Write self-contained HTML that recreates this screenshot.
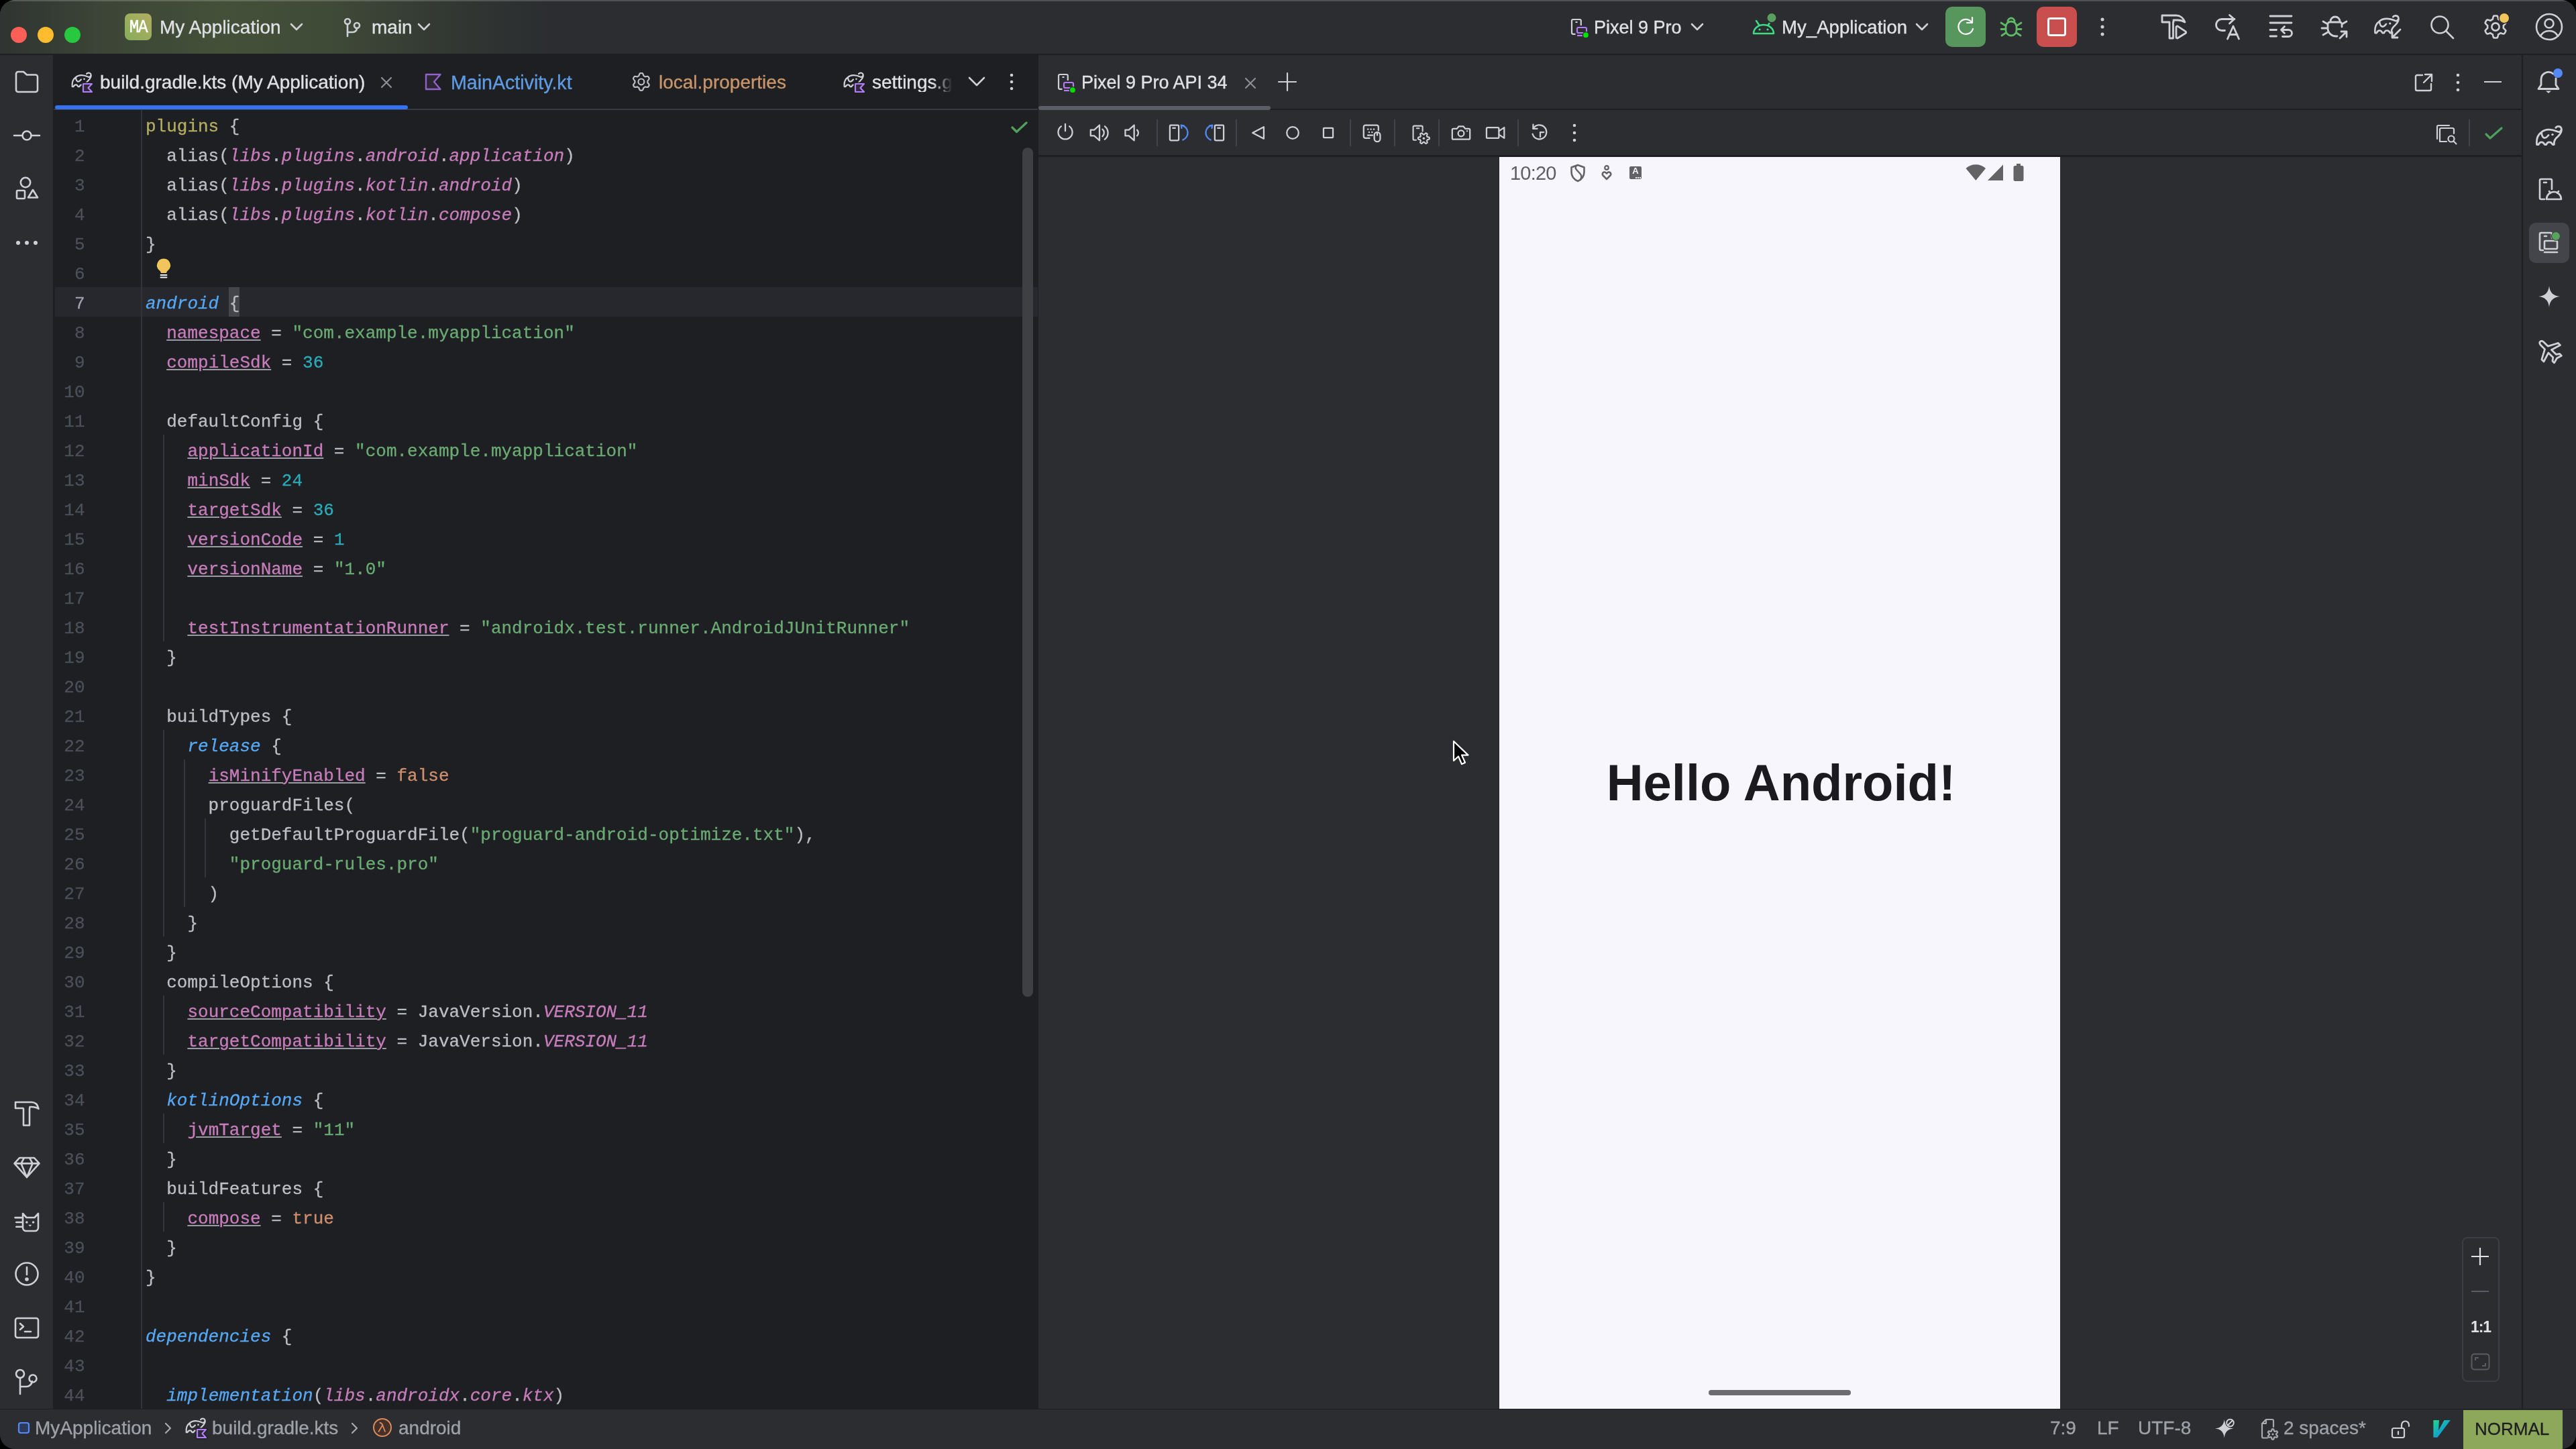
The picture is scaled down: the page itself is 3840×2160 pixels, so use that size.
<!DOCTYPE html>
<html><head><meta charset="utf-8">
<style>
*{box-sizing:border-box;margin:0;padding:0}
html,body{width:3840px;height:2160px;overflow:hidden;background:#000}
body{font-family:"Liberation Sans",sans-serif;position:relative}
.abs{position:absolute}
#win{position:absolute;left:0;top:0;width:3840px;height:2160px;background:#2b2d30;border-radius:22px;overflow:hidden;will-change:transform}
#title{position:absolute;left:0;top:0;width:3840px;height:82px;background:#2b2d30;border-bottom:2px solid #1e1f22}
#titleglow{position:absolute;left:0;top:0;width:1100px;height:80px;background:linear-gradient(90deg,rgba(98,124,68,0.08) 0px,rgba(98,124,68,0.3) 150px,rgba(98,124,68,0.45) 330px,rgba(98,124,68,0.38) 480px,rgba(98,124,68,0.12) 680px,rgba(98,124,68,0) 820px)}
.tl{position:absolute;top:40px;width:24px;height:24px;border-radius:50%}
.tt{position:absolute;color:#dfe1e5;font-size:28px;line-height:28px;white-space:pre;-webkit-text-stroke:0.35px currentColor}
#leftbar{position:absolute;left:0;top:80px;width:80px;height:2020px;background:#2b2d30;border-right:1px solid #1e1f22}
#editor{position:absolute;left:80px;top:80px;width:1468px;height:2020px;background:#1e1f22}
#etabs{position:absolute;left:0;top:0;width:1467px;height:84px;background:#1e1f22;border-bottom:2px solid #393b40}
#emu{position:absolute;left:1548px;top:80px;width:2211px;height:2020px;background:#2b2d30}
#rightbar{position:absolute;left:3759px;top:80px;width:81px;height:2020px;background:#2b2d30;border-left:2px solid #1e1f22}
#status{position:absolute;left:0;top:2100px;width:3840px;height:60px;background:#2b2d30;border-top:1px solid #1e1f22}
.ico{position:absolute;overflow:visible}
.ico *{fill:none;stroke:#ced0d6;stroke-width:2.6;stroke-linecap:round;stroke-linejoin:round}
#code{position:absolute;left:0;top:84px;width:1467px;height:1936px;font-family:"Liberation Mono",monospace;font-size:26px;-webkit-text-stroke:0.3px currentColor}
.ln{position:absolute;left:0;width:46.5px;text-align:right;color:#4b5059;height:44px;line-height:44px;padding-top:3px}
.ln.cur{color:#a1a3ab}
.cl{position:absolute;left:137px;height:44px;line-height:44px;white-space:pre;color:#bcbec4;padding-top:3px}
.k{color:#cf8e6d}.s{color:#6aab73}.n{color:#2aacb8}.p{color:#c77dbb}.f{color:#56a8f5;font-style:italic}.i{font-style:italic}
.u{text-decoration:underline;text-decoration-color:#9a9ca1;text-underline-offset:1.5px;text-decoration-thickness:2px}
.y{color:#b3ae60}
.guide{position:absolute;width:2px;background:#34363b}
</style></head><body>
<div id="win">
  <div id="title">
    <div id="titleglow"></div>
    <div class="tl" style="left:16px;background:#ff5f57"></div>
    <div class="tl" style="left:56px;background:#febc2e"></div>
    <div class="tl" style="left:96px;background:#28c840"></div>
    <div class="abs" style="left:186px;top:20px;width:40px;height:40px;border-radius:8px;background:linear-gradient(45deg,#86ad5a,#b2ad62)"></div>
    <div class="abs" style="left:186px;top:20px;width:40px;height:40px;line-height:42px;text-align:center;font-family:'Liberation Mono';font-size:27px;color:#fff;letter-spacing:-1.5px;transform:scaleX(0.9);-webkit-text-stroke:0.5px #fff">MA</div>
    <div class="tt" style="left:238px;top:27px">My Application</div>
    <svg class="ico" style="left:432px;top:34px" width="20" height="12" viewBox="0 0 20 12"><path d="M2 2l8 8 8-8"/></svg>
    <svg class="ico" style="left:510px;top:26px" width="30" height="30" viewBox="0 0 30 30"><circle cx="8" cy="6" r="4"/><circle cx="22" cy="12" r="4"/><path d="M8 10v18M8 22h8a6 6 0 0 0 6-6"/></svg>
    <div class="tt" style="left:554px;top:27px">main</div>
    <svg class="ico" style="left:622px;top:34px" width="20" height="12" viewBox="0 0 20 12"><path d="M2 2l8 8 8-8"/></svg>

    <svg class="ico" style="left:2338px;top:26px" width="34" height="34" viewBox="0 0 34 34"><path style="stroke-width:2.2;stroke-linecap:butt" d="M10.5 24.8H7a2 2 0 0 1-2-2V5a2 2 0 0 1 2-2h9.8a2 2 0 0 1 2 2v7M10.5 7h3"/><rect x="13" y="15" width="14" height="8" rx="2" style="stroke:#b57bf5;stroke-width:2.2"/><path style="stroke:#b57bf5;stroke-width:2.2;stroke-linecap:butt" d="M13 27h10"/><circle cx="26" cy="26.2" r="4.6" style="fill:#00e000;stroke:#2b2d30;stroke-width:1.4"/></svg>
    <div class="tt" style="left:2376px;top:27px;font-size:27px">Pixel 9 Pro</div>
    <svg class="ico" style="left:2520px;top:34px" width="20" height="12" viewBox="0 0 20 12"><path d="M2 2l8 8 8-8"/></svg>
    <svg class="ico" style="left:2610px;top:16px" width="44" height="38" viewBox="0 0 44 38"><path style="stroke:#3ddc84;stroke-width:2.6" d="M4 34a15 13 0 0 1 30 0zM8 15l4 6M30 15l-4 6"/><circle cx="13" cy="28" r="1.6" style="fill:#3ddc84;stroke:none"/><circle cx="25" cy="28" r="1.6" style="fill:#3ddc84;stroke:none"/><circle cx="31" cy="10.5" r="7.5" style="fill:#5a9e5f;stroke:#2b2d30;stroke-width:2"/></svg>
    <div class="tt" style="left:2656px;top:27px;font-size:27.6px">My_Application</div>
    <svg class="ico" style="left:2855px;top:34px" width="20" height="12" viewBox="0 0 20 12"><path d="M2 2l8 8 8-8"/></svg>
    <div class="abs" style="left:2900px;top:10px;width:60px;height:60px;border-radius:10px;background:#57965c"></div>
    <svg class="ico" style="left:2910px;top:20px" width="40" height="40" viewBox="0 0 40 40"><path style="stroke:#fff;stroke-width:2.2" d="M29 13a11 11 0 1 0 2 10"/><path style="stroke:#fff;stroke-width:2.2" d="M30 6v8h-8"/></svg>
    <svg class="ico" style="left:2980px;top:22px" width="36" height="36" viewBox="0 0 36 36"><path style="stroke:#5fb865;stroke-width:2.8" d="M13 10A5 5 0 0 1 23 10M10 18a8 8 0 0 1 16 0v5a8 8 0 0 1-16 0zM3 12l7 4.5M3 21.5h7M4 31l6-4M33 12l-7 4.5M33 21.5h-7M32 31l-6-4"/></svg>
    <div class="abs" style="left:3036px;top:10px;width:60px;height:60px;border-radius:10px;background:#c94f4f"></div>
    <div class="abs" style="left:3052px;top:26px;width:28px;height:28px;border-radius:4px;border:3px solid #fff"></div>
    <svg class="ico" style="left:3124px;top:22px" width="20" height="36" viewBox="0 0 20 36"><circle cx="10" cy="7" r="2.5" style="fill:#ced0d6;stroke:none"/><circle cx="10" cy="18" r="2.5" style="fill:#ced0d6;stroke:none"/><circle cx="10" cy="29" r="2.5" style="fill:#ced0d6;stroke:none"/></svg>
    <svg class="ico" style="left:3220px;top:20px" width="44" height="42" viewBox="0 0 44 42"><path style="stroke-width:2.8" d="M14 37V13H3V3H24C30 3 35 7 37 13C34 11 30 10 26 10H20V13M19.5 13V37H14"/><path style="stroke-width:2.8" d="M24 20.5V35.5A1.5 1.5 0 0 0 26.3 36.8L38 29.5A1.5 1.5 0 0 0 38 26.9L26.3 19.2A1.5 1.5 0 0 0 24 20.5Z"/></svg>
    <svg class="ico" style="left:3300px;top:20px" width="44" height="42" viewBox="0 0 44 42"><path style="stroke-width:2.8" d="M16.5 25.5H12A8.5 8.5 0 0 1 12 8.5H31M23.5 2.5L30.5 8.5L23.5 15M20.5 38L29 19L37.5 38M23 31.5H35"/></svg>
    <svg class="ico" style="left:3380px;top:20px" width="40" height="42" viewBox="0 0 40 42"><path style="stroke-width:2.8" d="M4 4H36M4 14H36M4 24.5H13.5M4 34H13.5M21 24.5H31.5A5 5 0 0 1 31.5 34.5H22.5M25.5 19.5L20.5 24.5L25.5 29.5"/></svg>
    <svg class="ico" style="left:3458px;top:20px" width="44" height="42" viewBox="0 0 44 42"><path style="stroke-width:2.8" d="M16 12a7 7 0 0 1 14 0M33 20V16a3 3 0 0 0-3-3H15a3 3 0 0 0-3 3v6a12 12 0 0 0 12 12h2M3 22h8M5 12l7 4M5 32l7-4M40 12l-7 4M30 37l10-10M32 27h8v8"/></svg>
    <svg class="ico" style="left:3538px;top:20px" width="46" height="42" viewBox="0 0 46 42"><g transform="translate(1,2) scale(0.95)"><path style="stroke:#ced0d6;stroke-width:2.74" d="M29.8 3.3C31.5 1 36.5 0.5 38 4C39.5 8 37 12.5 33 16.5C30 19 28 21.5 27.5 24.5L27.3 28.5H25.2C24 26 22 24.8 20.2 24.8C18.5 24.8 16.5 26 15.7 28.5H13.2C12 26 10.5 24.8 8.6 24.8C6.8 24.8 5 26 4.1 28.5H1.6C0.8 21 3 14 8 10.5C14 5 24 5.5 33.5 9.5C35.5 10 37 9 37.5 7.5M8.5 10C8.8 14 9.5 17.5 12.5 18.5C14.5 19 17 17 19 14.5"/><circle cx="25" cy="13.6" r="1.7" style="fill:#ced0d6;stroke:none"/></g><path style="stroke:#2b2d30;stroke-width:7" d="M40 24L28 36"/><path style="stroke:#ced0d6;stroke-width:2.8" d="M40 24L28 36M28 28v8h8"/></svg>
    <svg class="ico" style="left:3620px;top:20px" width="42" height="42" viewBox="0 0 42 42"><circle cx="17" cy="17" r="12.5"/><path d="M26 26l11 11"/></svg>
    <svg class="ico" style="left:3700px;top:20px" width="44" height="44" viewBox="0 0 44 44"><path style="stroke-width:2.6" d="M31.90 20.00L31.89 20.42L31.87 20.83L31.83 21.24L31.78 21.66L31.95 22.11L32.64 22.69L33.36 23.33L34.07 24.03L34.72 24.78L35.29 25.56L35.30 26.18L35.07 26.71L34.83 27.23L34.57 27.75L34.29 28.25L33.99 28.74L33.68 29.23L33.35 29.70L33.00 30.16L32.46 30.46L31.50 30.36L30.53 30.16L29.56 29.90L28.65 29.60L27.80 29.29L27.33 29.38L26.99 29.63L26.65 29.87L26.31 30.09L25.95 30.31L25.59 30.51L25.22 30.70L24.84 30.87L24.46 31.03L24.15 31.40L23.99 32.29L23.79 33.23L23.54 34.20L23.22 35.14L22.83 36.02L22.30 36.34L21.72 36.41L21.15 36.46L20.58 36.49L20.00 36.50L19.42 36.49L18.85 36.46L18.28 36.41L17.70 36.34L17.17 36.02L16.78 35.14L16.46 34.20L16.21 33.23L16.01 32.29L15.85 31.40L15.54 31.03L15.16 30.87L14.78 30.70L14.41 30.51L14.05 30.31L13.69 30.09L13.35 29.87L13.01 29.63L12.67 29.38L12.20 29.29L11.35 29.60L10.44 29.90L9.47 30.16L8.50 30.36L7.54 30.46L7.00 30.16L6.65 29.70L6.32 29.23L6.01 28.74L5.71 28.25L5.43 27.75L5.17 27.23L4.93 26.71L4.70 26.18L4.71 25.56L5.28 24.78L5.93 24.03L6.64 23.33L7.36 22.69L8.05 22.11L8.22 21.66L8.17 21.24L8.13 20.83L8.11 20.42L8.10 20.00L8.11 19.58L8.13 19.17L8.17 18.76L8.22 18.34L8.05 17.89L7.36 17.31L6.64 16.67L5.93 15.97L5.28 15.22L4.71 14.44L4.70 13.82L4.93 13.29L5.17 12.77L5.43 12.25L5.71 11.75L6.01 11.26L6.32 10.77L6.65 10.30L7.00 9.84L7.54 9.54L8.50 9.64L9.47 9.84L10.44 10.10L11.35 10.40L12.20 10.71L12.67 10.62L13.01 10.37L13.35 10.13L13.69 9.91L14.05 9.69L14.41 9.49L14.78 9.30L15.16 9.13L15.54 8.97L15.85 8.60L16.01 7.71L16.21 6.77L16.46 5.80L16.78 4.86L17.17 3.98L17.70 3.66L18.28 3.59L18.85 3.54L19.42 3.51L20.00 3.50L20.58 3.51L21.15 3.54L21.72 3.59L22.30 3.66L22.83 3.98L23.22 4.86L23.54 5.80L23.79 6.77L23.99 7.71L24.15 8.60L24.46 8.97L24.84 9.13L25.22 9.30L25.59 9.49L25.95 9.69L26.31 9.91L26.65 10.13L26.99 10.37L27.33 10.62L27.80 10.71L28.65 10.40L29.56 10.10L30.53 9.84L31.50 9.64L32.46 9.54L33.00 9.84L33.35 10.30L33.68 10.77L33.99 11.26L34.29 11.75L34.57 12.25L34.83 12.77L35.07 13.29L35.30 13.82L35.29 14.44L34.72 15.22L34.07 15.97L33.36 16.67L32.64 17.31L31.95 17.89L31.78 18.34L31.83 18.76L31.87 19.17L31.89 19.58L31.90 20.00Z"/><circle cx="20" cy="20" r="5.6" style="stroke-width:2.6"/><circle cx="33" cy="7" r="8.5" style="fill:#2b2d30;stroke:none"/><circle cx="33" cy="7" r="7" style="fill:#f2c55c;stroke:none"/></svg>
    <svg class="ico" style="left:3776px;top:18px" width="48" height="46" viewBox="0 0 48 46"><circle cx="24" cy="22" r="19"/><circle cx="24" cy="17" r="6.5"/><path d="M11 36c3-6 8-8 13-8s10 2 13 8"/></svg>

  </div>
  <div id="leftbar"></div>
  <div id="editor">
    <div id="etabs"></div>
    <div id="code">
<div class="abs" style="left:2px;top:264px;width:1465px;height:44px;background:#26282e"></div>
<div class="abs" style="left:261px;top:264px;width:16px;height:44px;background:#43454a"></div>
<div class="abs" style="left:130px;top:0;width:2px;height:1936px;background:#313338"></div>
<svg class="ico" style="left:152px;top:220px" width="24" height="34" viewBox="0 0 24 34"><path style="fill:#f2c55c;stroke:none" d="M12 1.5a10 10 0 0 0-6 18c1.2 1 1.8 2.2 1.8 3.6h8.4c0-1.4.6-2.6 1.8-3.6a10 10 0 0 0-6-18z"/><path style="stroke:#f2f2f2;stroke-width:2" d="M7.5 26h9M7.5 29.5h9"/></svg>
<div class="ln" style="top:0px">1</div>
<div class="cl" style="top:0px"><span class="y">plugins</span> {</div>
<div class="ln" style="top:44px">2</div>
<div class="cl" style="top:44px">  alias(<span class="p i">libs</span>.<span class="p i">plugins</span>.<span class="p i">android</span>.<span class="p i">application</span>)</div>
<div class="ln" style="top:88px">3</div>
<div class="cl" style="top:88px">  alias(<span class="p i">libs</span>.<span class="p i">plugins</span>.<span class="p i">kotlin</span>.<span class="p i">android</span>)</div>
<div class="ln" style="top:132px">4</div>
<div class="cl" style="top:132px">  alias(<span class="p i">libs</span>.<span class="p i">plugins</span>.<span class="p i">kotlin</span>.<span class="p i">compose</span>)</div>
<div class="ln" style="top:176px">5</div>
<div class="cl" style="top:176px">}</div>
<div class="ln" style="top:220px">6</div>
<div class="cl" style="top:220px"></div>
<div class="ln cur" style="top:264px">7</div>
<div class="cl" style="top:264px"><span class="f">android</span> <span class="br">{</span></div>
<div class="ln" style="top:308px">8</div>
<div class="cl" style="top:308px">  <span class="p u">namespace</span> = <span class="s">&quot;com.example.myapplication&quot;</span></div>
<div class="ln" style="top:352px">9</div>
<div class="cl" style="top:352px">  <span class="p u">compileSdk</span> = <span class="n">36</span></div>
<div class="ln" style="top:396px">10</div>
<div class="cl" style="top:396px"></div>
<div class="ln" style="top:440px">11</div>
<div class="cl" style="top:440px">  defaultConfig {</div>
<div class="ln" style="top:484px">12</div>
<div class="cl" style="top:484px">    <span class="p u">applicationId</span> = <span class="s">&quot;com.example.myapplication&quot;</span></div>
<div class="ln" style="top:528px">13</div>
<div class="cl" style="top:528px">    <span class="p u">minSdk</span> = <span class="n">24</span></div>
<div class="ln" style="top:572px">14</div>
<div class="cl" style="top:572px">    <span class="p u">targetSdk</span> = <span class="n">36</span></div>
<div class="ln" style="top:616px">15</div>
<div class="cl" style="top:616px">    <span class="p u">versionCode</span> = <span class="n">1</span></div>
<div class="ln" style="top:660px">16</div>
<div class="cl" style="top:660px">    <span class="p u">versionName</span> = <span class="s">&quot;1.0&quot;</span></div>
<div class="ln" style="top:704px">17</div>
<div class="cl" style="top:704px"></div>
<div class="ln" style="top:748px">18</div>
<div class="cl" style="top:748px">    <span class="p u">testInstrumentationRunner</span> = <span class="s">&quot;androidx.test.runner.AndroidJUnitRunner&quot;</span></div>
<div class="ln" style="top:792px">19</div>
<div class="cl" style="top:792px">  }</div>
<div class="ln" style="top:836px">20</div>
<div class="cl" style="top:836px"></div>
<div class="ln" style="top:880px">21</div>
<div class="cl" style="top:880px">  buildTypes {</div>
<div class="ln" style="top:924px">22</div>
<div class="cl" style="top:924px">    <span class="f">release</span> {</div>
<div class="ln" style="top:968px">23</div>
<div class="cl" style="top:968px">      <span class="p u">isMinifyEnabled</span> = <span class="k">false</span></div>
<div class="ln" style="top:1012px">24</div>
<div class="cl" style="top:1012px">      proguardFiles(</div>
<div class="ln" style="top:1056px">25</div>
<div class="cl" style="top:1056px">        getDefaultProguardFile(<span class="s">&quot;proguard-android-optimize.txt&quot;</span>),</div>
<div class="ln" style="top:1100px">26</div>
<div class="cl" style="top:1100px">        <span class="s">&quot;proguard-rules.pro&quot;</span></div>
<div class="ln" style="top:1144px">27</div>
<div class="cl" style="top:1144px">      )</div>
<div class="ln" style="top:1188px">28</div>
<div class="cl" style="top:1188px">    }</div>
<div class="ln" style="top:1232px">29</div>
<div class="cl" style="top:1232px">  }</div>
<div class="ln" style="top:1276px">30</div>
<div class="cl" style="top:1276px">  compileOptions {</div>
<div class="ln" style="top:1320px">31</div>
<div class="cl" style="top:1320px">    <span class="p u">sourceCompatibility</span> = JavaVersion.<span class="p i">VERSION_11</span></div>
<div class="ln" style="top:1364px">32</div>
<div class="cl" style="top:1364px">    <span class="p u">targetCompatibility</span> = JavaVersion.<span class="p i">VERSION_11</span></div>
<div class="ln" style="top:1408px">33</div>
<div class="cl" style="top:1408px">  }</div>
<div class="ln" style="top:1452px">34</div>
<div class="cl" style="top:1452px">  <span class="f">kotlinOptions</span> {</div>
<div class="ln" style="top:1496px">35</div>
<div class="cl" style="top:1496px">    <span class="p u">jvmTarget</span> = <span class="s">&quot;11&quot;</span></div>
<div class="ln" style="top:1540px">36</div>
<div class="cl" style="top:1540px">  }</div>
<div class="ln" style="top:1584px">37</div>
<div class="cl" style="top:1584px">  buildFeatures {</div>
<div class="ln" style="top:1628px">38</div>
<div class="cl" style="top:1628px">    <span class="p u">compose</span> = <span class="k">true</span></div>
<div class="ln" style="top:1672px">39</div>
<div class="cl" style="top:1672px">  }</div>
<div class="ln" style="top:1716px">40</div>
<div class="cl" style="top:1716px">}</div>
<div class="ln" style="top:1760px">41</div>
<div class="cl" style="top:1760px"></div>
<div class="ln" style="top:1804px">42</div>
<div class="cl" style="top:1804px"><span class="f">dependencies</span> {</div>
<div class="ln" style="top:1848px">43</div>
<div class="cl" style="top:1848px"></div>
<div class="ln" style="top:1892px">44</div>
<div class="cl" style="top:1892px">  <span class="f">implementation</span>(<span class="p i">libs</span>.<span class="p i">androidx</span>.<span class="p i">core</span>.<span class="p i">ktx</span>)</div>
<div class="guide" style="left:162.6px;top:484px;height:308px"></div>
<div class="guide" style="left:162.6px;top:924px;height:308px"></div>
<div class="guide" style="left:193.8px;top:968px;height:220px"></div>
<div class="guide" style="left:225.0px;top:1056px;height:88px"></div>
<div class="guide" style="left:162.6px;top:1320px;height:88px"></div>
<div class="guide" style="left:162.6px;top:1496px;height:44px"></div>
<div class="guide" style="left:162.6px;top:1628px;height:44px"></div>
</div><!--/code-->
  </div>
  <div id="emu"></div>
    <svg class="ico" style="left:1506px;top:180px" width="28" height="22" viewBox="0 0 28 22"><path style="stroke:#529e5d;stroke-width:3.4" d="M3 10l6.5 6.5L24 3"/></svg>
    <div class="abs" style="left:1524px;top:220px;width:16px;height:1266px;border-radius:8px;background:#3f4044"></div>

    <svg class="ico" style="left:106px;top:107px" width="34" height="34" viewBox="0 0 34 34"><g transform="translate(0.5,0.5) scale(0.76)"><path style="stroke:#ced0d6;stroke-width:2.89" d="M29.8 3.3C31.5 1 36.5 0.5 38 4C39.5 8 37 12.5 33 16.5C30 19 28 21.5 27.5 24.5L27.3 28.5H25.2C24 26 22 24.8 20.2 24.8C18.5 24.8 16.5 26 15.7 28.5H13.2C12 26 10.5 24.8 8.6 24.8C6.8 24.8 5 26 4.1 28.5H1.6C0.8 21 3 14 8 10.5C14 5 24 5.5 33.5 9.5C35.5 10 37 9 37.5 7.5M8.5 10C8.8 14 9.5 17.5 12.5 18.5C14.5 19 17 17 19 14.5"/><circle cx="25" cy="13.6" r="1.7" style="fill:#ced0d6;stroke:none"/></g><path style="stroke:#1e1f22;stroke-width:5;fill:#1e1f22" d="M18 18H31L25.5 24L31 30H18Z"/><path style="stroke:#b27ef8;stroke-width:2.2;fill:#2f2a3a" d="M18 18H31L25.5 24L31 30H18Z"/></svg>
    <div class="tt" style="left:149px;top:109px">build.gradle.kts (My Application)</div>
    <svg class="ico" style="left:566px;top:113px" width="20" height="20" viewBox="0 0 20 20"><path style="stroke:#8c8e94;stroke-width:2.2" d="M3 3l14 14M17 3L3 17"/></svg>
    <div class="abs" style="left:82px;top:157px;width:526px;height:6px;border-radius:3px;background:#3574f0"></div>
    <svg class="ico" style="left:633px;top:109px" width="26" height="26" viewBox="0 0 26 26"><path style="stroke:#9162c9;stroke-width:2.4;fill:#2b2632;stroke-linejoin:round" d="M2 2H23.5L14 13L23.5 24H2Z"/></svg>
    <div class="tt" style="left:672px;top:109px;color:#5e9be3;font-size:28.6px">MainActivity.kt</div>
    <svg class="ico" style="left:940px;top:108px" width="32" height="32" viewBox="0 0 32 32"><path style="stroke:#bcbec4;stroke-width:2.2" d="M25.40 13.90L25.39 14.31L25.36 14.73L25.34 15.14L25.76 15.64L26.23 16.19L26.72 16.80L27.17 17.45L27.54 18.14L27.80 18.83L27.59 19.35L27.34 19.86L27.07 20.35L26.78 20.83L26.47 21.30L26.12 21.74L25.39 21.86L24.61 21.88L23.82 21.82L23.05 21.70L22.33 21.57L21.69 21.45L21.35 21.68L21.00 21.91L20.65 22.13L20.29 22.33L19.91 22.51L19.54 22.69L19.32 23.31L19.08 23.99L18.80 24.72L18.46 25.44L18.05 26.10L17.58 26.67L17.02 26.75L16.46 26.79L15.90 26.80L15.34 26.79L14.78 26.75L14.22 26.67L13.75 26.10L13.34 25.44L13.00 24.72L12.72 23.99L12.48 23.31L12.26 22.69L11.89 22.51L11.51 22.33L11.15 22.13L10.80 21.91L10.45 21.68L10.11 21.45L9.47 21.57L8.75 21.70L7.98 21.82L7.19 21.88L6.41 21.86L5.68 21.74L5.33 21.30L5.02 20.83L4.73 20.35L4.46 19.86L4.21 19.35L4.00 18.83L4.26 18.14L4.63 17.45L5.08 16.80L5.57 16.19L6.04 15.64L6.46 15.14L6.44 14.73L6.41 14.31L6.40 13.90L6.41 13.49L6.44 13.07L6.46 12.66L6.04 12.16L5.57 11.61L5.08 11.00L4.63 10.35L4.26 9.66L4.00 8.97L4.21 8.45L4.46 7.94L4.73 7.45L5.02 6.97L5.33 6.50L5.68 6.06L6.41 5.94L7.19 5.92L7.98 5.98L8.75 6.10L9.47 6.23L10.11 6.35L10.45 6.12L10.80 5.89L11.15 5.67L11.51 5.47L11.89 5.29L12.26 5.11L12.48 4.49L12.72 3.81L13.00 3.08L13.34 2.36L13.75 1.70L14.22 1.13L14.78 1.05L15.34 1.01L15.90 1.00L16.46 1.01L17.02 1.05L17.58 1.13L18.05 1.70L18.46 2.36L18.80 3.08L19.08 3.81L19.32 4.49L19.54 5.11L19.91 5.29L20.29 5.47L20.65 5.67L21.00 5.89L21.35 6.12L21.69 6.35L22.33 6.23L23.05 6.10L23.82 5.98L24.61 5.92L25.39 5.94L26.12 6.06L26.47 6.50L26.78 6.97L27.07 7.45L27.34 7.94L27.59 8.45L27.80 8.97L27.54 9.66L27.17 10.35L26.72 11.00L26.23 11.61L25.76 12.16L25.34 12.66L25.36 13.07L25.39 13.49L25.40 13.90Z"/><circle cx="15.9" cy="13.9" r="4.4" style="stroke:#bcbec4;stroke-width:2.2"/></svg>
    <div class="tt" style="left:982px;top:109px;color:#c8956a">local.properties</div>
    <svg class="ico" style="left:1257px;top:107px" width="34" height="34" viewBox="0 0 34 34"><g transform="translate(0.5,0.5) scale(0.76)"><path style="stroke:#ced0d6;stroke-width:2.89" d="M29.8 3.3C31.5 1 36.5 0.5 38 4C39.5 8 37 12.5 33 16.5C30 19 28 21.5 27.5 24.5L27.3 28.5H25.2C24 26 22 24.8 20.2 24.8C18.5 24.8 16.5 26 15.7 28.5H13.2C12 26 10.5 24.8 8.6 24.8C6.8 24.8 5 26 4.1 28.5H1.6C0.8 21 3 14 8 10.5C14 5 24 5.5 33.5 9.5C35.5 10 37 9 37.5 7.5M8.5 10C8.8 14 9.5 17.5 12.5 18.5C14.5 19 17 17 19 14.5"/><circle cx="25" cy="13.6" r="1.7" style="fill:#ced0d6;stroke:none"/></g><path style="stroke:#1e1f22;stroke-width:5;fill:#1e1f22" d="M18 18H31L25.5 24L31 30H18Z"/><path style="stroke:#b27ef8;stroke-width:2.2;fill:#2f2a3a" d="M18 18H31L25.5 24L31 30H18Z"/></svg>
    <div class="tt" style="left:1300px;top:109px;width:120px;overflow:hidden;-webkit-mask-image:linear-gradient(90deg,#000 75%,transparent 100%)">settings.gradle.kts</div>
    <svg class="ico" style="left:1443px;top:114px" width="26" height="16" viewBox="0 0 26 16"><path d="M2 2l11 11L24 2"/></svg>
    <svg class="ico" style="left:1498px;top:108px" width="20" height="30" viewBox="0 0 20 30"><circle cx="10" cy="4" r="2.3" style="fill:#ced0d6;stroke:none"/><circle cx="10" cy="14" r="2.3" style="fill:#ced0d6;stroke:none"/><circle cx="10" cy="24" r="2.3" style="fill:#ced0d6;stroke:none"/></svg>

  
    <div class="abs" style="left:1548px;top:162px;width:2211px;height:2px;background:#1e1f22"></div>
    <div class="abs" style="left:1548px;top:231px;width:2211px;height:3px;background:#1e1f22"></div>
    <div class="abs" style="left:1548px;top:158px;width:346px;height:6px;border-radius:3px;background:#5a5d63"></div>
    <svg class="ico" style="left:1573px;top:108px" width="34" height="34" viewBox="0 0 34 34"><path style="stroke-width:2.2;stroke-linecap:butt" d="M10.5 24.8H7a2 2 0 0 1-2-2V5a2 2 0 0 1 2-2h9.8a2 2 0 0 1 2 2v7M10.5 7h3"/><rect x="13" y="15" width="14" height="8" rx="2" style="stroke:#b57bf5;stroke-width:2.2"/><path style="stroke:#b57bf5;stroke-width:2.2;stroke-linecap:butt" d="M13 27h10"/><circle cx="26" cy="26.2" r="4.6" style="fill:#00e000;stroke:#2b2d30;stroke-width:1.4"/></svg>
    <div class="tt" style="left:1612px;top:109px;font-size:27px">Pixel 9 Pro API 34</div>
    <svg class="ico" style="left:1854px;top:114px" width="20" height="20" viewBox="0 0 20 20"><path style="stroke:#8c8e94;stroke-width:2.2" d="M3 3l14 14M17 3L3 17"/></svg>
    <svg class="ico" style="left:1904px;top:107px" width="30" height="30" viewBox="0 0 30 30"><path style="stroke-width:2.2" d="M15 2v26M2 15h26"/></svg>
    <svg class="ico" style="left:3598px;top:108px" width="30" height="30" viewBox="0 0 30 30"><path style="stroke-width:2.4" d="M13 4H5a2 2 0 0 0-2 2v19a2 2 0 0 0 2 2h19a2 2 0 0 0 2-2v-8M17 3h10v10M27 3L15 15"/></svg>
    <svg class="ico" style="left:3654px;top:108px" width="20" height="30" viewBox="0 0 20 30"><circle cx="10" cy="4" r="2.3" style="fill:#ced0d6;stroke:none"/><circle cx="10" cy="15" r="2.3" style="fill:#ced0d6;stroke:none"/><circle cx="10" cy="26" r="2.3" style="fill:#ced0d6;stroke:none"/></svg>
    <div class="abs" style="left:3703px;top:121px;width:26px;height:2px;background:#ced0d6"></div>

    <svg class="ico" style="left:1568px;top:178px;transform:scale(0.88)" width="40" height="40" viewBox="0 0 40 40"><path d="M20 5v12M13 9a12 12 0 1 0 14 0"/></svg>
    <svg class="ico" style="left:1619px;top:178px;transform:scale(0.88)" width="40" height="40" viewBox="0 0 40 40"><path d="M5 15h6l9-8v26l-9-8H5z"/><path d="M25 14a8 8 0 0 1 0 12M29 9a14 14 0 0 1 0 22"/></svg>
    <svg class="ico" style="left:1668px;top:178px;transform:scale(0.88)" width="40" height="40" viewBox="0 0 40 40"><path d="M8 15h6l9-8v26l-9-8H8z"/><path d="M28 15a7 7 0 0 1 0 10"/></svg>
    <div class="abs" style="left:1724px;top:178px;width:2px;height:40px;background:#43454a"></div>
    <svg class="ico" style="left:1738px;top:178px;transform:scale(0.88)" width="40" height="40" viewBox="0 0 40 40"><rect x="4" y="7" width="15" height="26" rx="1.5"/><path d="M9 12h4"/><path style="stroke:#548af7" d="M23 7a13 13 0 0 1 3 25M23 7l1 5M23 7l5 1"/></svg>
    <svg class="ico" style="left:1790px;top:178px;transform:scale(0.88)" width="40" height="40" viewBox="0 0 40 40"><rect x="21" y="7" width="15" height="26" rx="1.5"/><path d="M26 12h4"/><path style="stroke:#548af7" d="M17 7a13 13 0 0 0-3 25M17 7l-1 5M17 7l-5 1"/></svg>
    <div class="abs" style="left:1842px;top:178px;width:2px;height:40px;background:#43454a"></div>
    <svg class="ico" style="left:1856px;top:178px;transform:scale(0.88)" width="40" height="40" viewBox="0 0 40 40"><path d="M29 10v20L10 20z"/></svg>
    <svg class="ico" style="left:1907px;top:178px;transform:scale(0.88)" width="40" height="40" viewBox="0 0 40 40"><circle cx="20" cy="20" r="10"/></svg>
    <svg class="ico" style="left:1960px;top:178px;transform:scale(0.88)" width="40" height="40" viewBox="0 0 40 40"><rect x="12" y="12" width="16" height="16" rx="1"/></svg>
    <div class="abs" style="left:2012px;top:178px;width:2px;height:40px;background:#43454a"></div>
    <svg class="ico" style="left:2026px;top:178px;transform:scale(0.88)" width="40" height="40" viewBox="0 0 40 40"><path d="M15 29H8a3 3 0 0 1-3-3V10a3 3 0 0 1 3-3h19a3 3 0 0 1 3 3v6M12 14h.5M17 14h.5M22 14h.5M14 19h.5M19 19h.5M12 24h8"/><rect x="23" y="19" width="10" height="16" rx="5"/><path d="M28 19v5"/></svg>
    <div class="abs" style="left:2078px;top:178px;width:2px;height:40px;background:#43454a"></div>
    <svg class="ico" style="left:2098px;top:180px;transform:scale(0.88)" width="40" height="40" viewBox="0 0 40 40"><path style="stroke-width:2.4" d="M12 30H9a2 2 0 0 1-2-2V8a2 2 0 0 1 2-2h12a2 2 0 0 1 2 2v7M13 10h4"/><path style="stroke-width:2.4" d="M34.60 27.00L34.58 27.63L34.52 28.25L33.81 28.75L32.73 29.07L31.65 29.26L30.91 29.45L30.74 29.83L30.54 30.20L30.32 30.56L30.08 30.90L30.28 31.63L30.66 32.66L30.92 33.75L30.84 34.62L30.33 34.98L29.80 35.31L29.25 35.61L28.67 35.87L27.89 35.50L27.07 34.73L26.37 33.89L25.84 33.35L25.42 33.39L25.00 33.40L24.58 33.39L24.16 33.35L23.63 33.89L22.93 34.73L22.11 35.50L21.33 35.87L20.75 35.61L20.20 35.31L19.67 34.98L19.16 34.62L19.08 33.75L19.34 32.66L19.72 31.63L19.92 30.90L19.68 30.56L19.46 30.20L19.26 29.83L19.09 29.45L18.35 29.26L17.27 29.07L16.19 28.75L15.48 28.25L15.42 27.63L15.40 27.00L15.42 26.37L15.48 25.75L16.19 25.25L17.27 24.93L18.35 24.74L19.09 24.55L19.26 24.17L19.46 23.80L19.68 23.44L19.92 23.10L19.72 22.37L19.34 21.34L19.08 20.25L19.16 19.38L19.67 19.02L20.20 18.69L20.75 18.39L21.33 18.13L22.11 18.50L22.93 19.27L23.63 20.11L24.16 20.65L24.58 20.61L25.00 20.60L25.42 20.61L25.84 20.65L26.37 20.11L27.07 19.27L27.89 18.50L28.67 18.13L29.25 18.39L29.80 18.69L30.33 19.02L30.84 19.38L30.92 20.25L30.66 21.34L30.28 22.37L30.08 23.10L30.32 23.44L30.54 23.80L30.74 24.17L30.91 24.55L31.65 24.74L32.73 24.93L33.81 25.25L34.52 25.75L34.58 26.37L34.60 27.00Z"/><circle cx="25" cy="27" r="2" style="fill:#ced0d6;stroke:none"/></svg>
    <div class="abs" style="left:2144px;top:178px;width:2px;height:40px;background:#43454a"></div>
    <svg class="ico" style="left:2158px;top:178px;transform:scale(0.88)" width="40" height="40" viewBox="0 0 40 40"><path d="M7 13h6l3-4h8l3 4h6a2 2 0 0 1 2 2v14a2 2 0 0 1-2 2H7a2 2 0 0 1-2-2V15a2 2 0 0 1 2-2z"/><circle cx="20" cy="21" r="5"/><path d="M30 17h.5"/></svg>
    <svg class="ico" style="left:2210px;top:178px;transform:scale(0.88)" width="40" height="40" viewBox="0 0 40 40"><rect x="4" y="11" width="21" height="18" rx="2"/><path d="M25 17l9-6v18l-9-6"/></svg>
    <div class="abs" style="left:2262px;top:178px;width:2px;height:40px;background:#43454a"></div>
    <svg class="ico" style="left:2276px;top:178px;transform:scale(0.88)" width="40" height="40" viewBox="0 0 40 40"><path d="M8 13a12 12 0 1 1-1 9"/><path d="M8 6v7h7"/><path d="M20 27v-8h6"/></svg>
    <svg class="ico" style="left:2337px;top:183px" width="20" height="30" viewBox="0 0 20 30"><circle cx="10" cy="4" r="2.3" style="fill:#ced0d6;stroke:none"/><circle cx="10" cy="15" r="2.3" style="fill:#ced0d6;stroke:none"/><circle cx="10" cy="26" r="2.3" style="fill:#ced0d6;stroke:none"/></svg>
    <svg class="ico" style="left:3630px;top:183px" width="36" height="34" viewBox="0 0 36 34"><path style="stroke-width:2.2" d="M3 24V6a2 2 0 0 1 2-2h16M7 28V10a2 2 0 0 1 2-2h17a2 2 0 0 1 2 2v6M7 28h10"/><circle cx="24" cy="24" r="4.5" style="stroke-width:2.2"/><path style="stroke-width:2.2" d="M27.5 27.5l4 4"/></svg>
    <div class="abs" style="left:3680px;top:178px;width:2px;height:40px;background:#43454a"></div>
    <svg class="ico" style="left:3703px;top:188px" width="30" height="24" viewBox="0 0 30 24"><path style="stroke:#529e5d;stroke-width:3.2" d="M3 12l6 6L26 3"/></svg>

    <div class="abs" style="left:2235px;top:234px;width:836px;height:1866px;background:#f7f6fc"></div>
<div id="rightbar"></div><div id="status"></div><div class="abs" style="left:0;top:80px;width:3840px;height:2px;background:#1e1f22"></div><div class="abs" style="left:0;top:0;width:3840px;height:2px;background:rgba(255,255,255,0.18);border-radius:22px 22px 0 0"></div>
    <div class="abs" style="left:2251px;top:241px;font-size:29px;line-height:34px;color:#5f6064;white-space:pre;letter-spacing:-0.8px">10:20</div>
    <svg class="ico" style="left:2340px;top:244px" width="24" height="28" viewBox="0 0 24 28"><path style="stroke:#636366;stroke-width:2.6" d="M12 2L2.5 5.5v7c0 6.5 4 11 9.5 13.5c5.5-2.5 9.5-7 9.5-13.5v-7z"/><path style="stroke:#636366;stroke-width:2.4" d="M10 3c-2 2-1.5 4.5 0.5 6.5l5 5.5c2 2 2.5 5 0.5 8.5"/></svg>
    <svg class="ico" style="left:2386px;top:246px" width="18" height="24" viewBox="0 0 18 24"><circle cx="9" cy="4" r="2.8" style="stroke:#636366;stroke-width:2.2"/><path style="stroke:#636366;stroke-width:2.6" d="M9 21L3.5 15.5a3 3 0 0 1 4.5-4L9 12.5l1-1a3 3 0 0 1 4.5 4z"/></svg>
    <div class="abs" style="left:2429px;top:248px;width:18px;height:19px;border-radius:2px;background:#636366"></div>
    <div class="abs" style="left:2429px;top:246px;width:18px;height:19px;text-align:center;font-size:13px;line-height:18px;font-weight:700;color:#f7f6fc">A</div><div class="abs" style="left:2438px;top:264px;width:2px;height:2px;background:#f7f6fc"></div><div class="abs" style="left:2441px;top:264px;width:2px;height:2px;background:#f7f6fc"></div><div class="abs" style="left:2444px;top:264px;width:2px;height:2px;background:#f7f6fc"></div>
    <svg class="ico" style="left:2930px;top:244px" width="32" height="26" viewBox="0 0 32 26"><path style="fill:#636366;stroke:none" d="M0.5 7A22 22 0 0 1 30 7L15.3 25z"/></svg>
    <svg class="ico" style="left:2962px;top:244px" width="26" height="26" viewBox="0 0 26 26"><path style="fill:#636366;stroke:none" d="M24 1.5V25H1z"/></svg>
    <svg class="ico" style="left:3000px;top:243px" width="18" height="28" viewBox="0 0 18 28"><path style="fill:#636366;stroke:none" d="M6 1h6v3h2a2.5 2.5 0 0 1 2.5 2.5v18A2.5 2.5 0 0 1 14 27H4a2.5 2.5 0 0 1-2.5-2.5v-18A2.5 2.5 0 0 1 4 4h2z"/></svg>
    <div class="abs" style="left:2237px;top:1122px;width:836px;text-align:center;font-size:76px;line-height:90px;font-weight:700;color:#1b1b1f;white-space:pre">Hello Android!</div>
    <div class="abs" style="left:2547px;top:2072px;width:212px;height:8px;border-radius:4px;background:#6c6c70"></div>
    <svg class="ico" style="left:2164px;top:1102px" width="32" height="42" viewBox="0 0 32 42"><path style="fill:#000;stroke:#fff;stroke-width:2.2" d="M3 3v29l7-6.5 5 11.5 5-2.2-5-11.2h9.5z"/></svg>
    <div class="abs" style="left:3670px;top:1844px;width:56px;height:216px;border-radius:8px;border:2px solid #3c3e43"></div>
    <svg class="ico" style="left:3683px;top:1859px" width="28" height="28" viewBox="0 0 28 28"><path style="stroke:#dfe1e5;stroke-width:2.2;stroke-linecap:butt" d="M14 1v26M1 14h26"/></svg>
    <div class="abs" style="left:3684px;top:1924px;width:26px;height:2px;background:#5a5c61"></div>
    <div class="abs" style="left:3670px;top:1964px;width:56px;text-align:center;font-size:23px;line-height:28px;font-weight:700;color:#dfe1e5;letter-spacing:-1px">1:1</div>
    <svg class="ico" style="left:3683px;top:2017px" width="30" height="28" viewBox="0 0 30 28"><rect x="1.5" y="1.5" width="26" height="23" rx="4" style="stroke:#5a5c61;stroke-width:2"/><path style="stroke:#5a5c61;stroke-width:2;stroke-linecap:butt" d="M7 11V7h5M22 15v4h-5"/></svg>

    <svg class="ico" style="left:3780px;top:100px" width="44" height="44" viewBox="0 0 44 44"><path style="stroke-width:2.8" d="M26 10A11 11 0 0 0 8 18V26.5L4 32.5H34L30 26.5V17"/><path style="fill:#ced0d6;stroke:none" d="M15 35.5h8l-4 3.5z"/><circle cx="33" cy="9" r="7" style="fill:#548af7;stroke:none"/></svg>
    <svg class="ico" style="left:3780px;top:187px" width="40" height="30" viewBox="0 0 40 30"><g transform="translate(0,0) scale(1)"><path style="stroke:#ced0d6;stroke-width:2.80" d="M29.8 3.3C31.5 1 36.5 0.5 38 4C39.5 8 37 12.5 33 16.5C30 19 28 21.5 27.5 24.5L27.3 28.5H25.2C24 26 22 24.8 20.2 24.8C18.5 24.8 16.5 26 15.7 28.5H13.2C12 26 10.5 24.8 8.6 24.8C6.8 24.8 5 26 4.1 28.5H1.6C0.8 21 3 14 8 10.5C14 5 24 5.5 33.5 9.5C35.5 10 37 9 37.5 7.5M8.5 10C8.8 14 9.5 17.5 12.5 18.5C14.5 19 17 17 19 14.5"/><circle cx="25" cy="13.6" r="1.7" style="fill:#ced0d6;stroke:none"/></g></svg>
    <svg class="ico" style="left:3781px;top:262px" width="40" height="40" viewBox="0 0 40 40"><path d="M12 35H7a2 2 0 0 1-2-2V7a2 2 0 0 1 2-2h14a2 2 0 0 1 2 2v13M11 10h4"/><path d="M15 35a11 11 0 0 1 22 0zM19 23l2 3M33 23l-2 3"/></svg>
    <div class="abs" style="left:3770px;top:332px;width:60px;height:60px;border-radius:10px;background:#43454a"></div>
    <svg class="ico" style="left:3780px;top:342px" width="40" height="40" viewBox="0 0 40 40"><path d="M11 31H8a2 2 0 0 1-2-2V7a2 2 0 0 1 2-2h14a2 2 0 0 1 2 2v6M13 10h3"/><rect x="13" y="17" width="19" height="12" rx="1.5"/><path d="M13 34h19"/><circle cx="30" cy="10" r="6.5" style="fill:#57a55c;stroke:#43454a;stroke-width:1.2"/></svg>
    <svg class="ico" style="left:3782px;top:424px" width="36" height="36" viewBox="0 0 36 36"><path style="fill:#ced0d6;stroke:none" d="M18 2C19 12 24 17 34 18C24 19 19 24 18 34C17 24 12 19 2 18C12 17 17 12 18 2z"/></svg>
    <svg class="ico" style="left:3780px;top:502px" width="40" height="40" viewBox="1.5 1 37 37"><path style="stroke-width:2.6" transform="rotate(-45 20 20)" d="M20 2.5C22 2.5 23 4.5 23 6.5V14.5L36 21.5V25.5L23 21.5V30.5L27 33.5V37L20 35L13 37V33.5L17 30.5V21.5L4 25.5V21.5L17 14.5V6.5C17 4.5 18 2.5 20 2.5Z"/></svg>

    <svg class="ico" style="left:20px;top:104px" width="40" height="36" viewBox="0 0 40 36"><path d="M4 6a3 3 0 0 1 3-3h8l5 4.5h13a3 3 0 0 1 3 3V30a3 3 0 0 1-3 3H7a3 3 0 0 1-3-3z"/></svg>
    <svg class="ico" style="left:18px;top:182px" width="44" height="40" viewBox="0 0 44 40"><circle cx="22" cy="20" r="6.5"/><path d="M3 20h12.5M28.5 20H41"/></svg>
    <svg class="ico" style="left:20px;top:262px" width="40" height="40" viewBox="0 0 40 40"><circle cx="18" cy="10" r="7.2"/><rect x="5" y="22" width="12" height="12" rx="1.5"/><path d="M29 21l-7 11.5h14z"/></svg>
    <svg class="ico" style="left:20px;top:342px" width="40" height="40" viewBox="0 0 40 40"><circle cx="7" cy="20" r="3" style="fill:#ced0d6;stroke:none"/><circle cx="20" cy="20" r="3" style="fill:#ced0d6;stroke:none"/><circle cx="33" cy="20" r="3" style="fill:#ced0d6;stroke:none"/></svg>
    <svg class="ico" style="left:20px;top:1640px" width="40" height="40" viewBox="0 0 40 40"><path style="stroke-width:2.6" d="M3 3H27C32 3 36 6 37.5 13C34 10.5 30 10 27 10H24.5L24 13V37.5H15V13L14.5 12H3Z"/></svg>
    <svg class="ico" style="left:20px;top:1716px" width="40" height="42" viewBox="0 0 40 42"><path style="stroke-width:2.6" d="M9 10H31L38.5 18.4L20 39L1.5 18.4ZM1.5 18.4H38.5M16 10L11.5 18.4L20 39L28.5 18.4L24 10"/></svg>
    <svg class="ico" style="left:20px;top:1800px" width="40" height="40" viewBox="0 0 40 40"><path style="stroke-width:2.6" d="M14 9L19.5 15H31.5L37 9V30A5 5 0 0 1 32 35H19A5 5 0 0 1 14 30ZM2.5 15.1H12M4.3 22H12M4.3 28.8H12"/><circle cx="19.9" cy="22" r="1.8" style="fill:#ced0d6;stroke:none"/><circle cx="29.6" cy="22" r="1.8" style="fill:#ced0d6;stroke:none"/><path style="fill:#ced0d6;stroke:none" d="M22.3 25.8H27.3L24.8 28.6Z"/></svg>
    <svg class="ico" style="left:20px;top:1879px" width="40" height="40" viewBox="0 0 40 40"><circle cx="20" cy="20" r="16.5"/><path d="M20 10v11"/><circle cx="20" cy="28" r="1.5" style="fill:#ced0d6"/></svg>
    <svg class="ico" style="left:20px;top:1959px" width="40" height="40" viewBox="0 0 40 40"><rect x="3" y="6" width="34" height="29" rx="3"/><path d="M10 14l5 4.5-5 4.5M17 26h9"/></svg>
    <svg class="ico" style="left:20px;top:2038px" width="40" height="44" viewBox="0 0 40 44"><circle cx="10" cy="10" r="6"/><circle cx="29" cy="17" r="5.5"/><path d="M10 16v24M10 29h9a9 9 0 0 0 9-8"/></svg>

    <svg class="ico" style="left:26px;top:2118px" width="20" height="22" viewBox="0 0 20 22"><rect x="2" y="3" width="15" height="15" rx="3" style="stroke:#548af7;stroke-width:2.2;fill:#2e3a5c"/></svg>
    <div class="tt" style="left:52px;top:2115px;color:#9ea1a8">MyApplication</div>
    <svg class="ico" style="left:242px;top:2118px" width="18" height="22" viewBox="0 0 18 22"><path style="stroke:#a8aab0;stroke-width:2.2" d="M5 4l7 7-7 7"/></svg>
    <svg class="ico" style="left:276px;top:2113px" width="34" height="34" viewBox="0 0 34 34"><g transform="translate(0.5,0.5) scale(0.76)"><path style="stroke:#ced0d6;stroke-width:2.89" d="M29.8 3.3C31.5 1 36.5 0.5 38 4C39.5 8 37 12.5 33 16.5C30 19 28 21.5 27.5 24.5L27.3 28.5H25.2C24 26 22 24.8 20.2 24.8C18.5 24.8 16.5 26 15.7 28.5H13.2C12 26 10.5 24.8 8.6 24.8C6.8 24.8 5 26 4.1 28.5H1.6C0.8 21 3 14 8 10.5C14 5 24 5.5 33.5 9.5C35.5 10 37 9 37.5 7.5M8.5 10C8.8 14 9.5 17.5 12.5 18.5C14.5 19 17 17 19 14.5"/><circle cx="25" cy="13.6" r="1.7" style="fill:#ced0d6;stroke:none"/></g><path style="stroke:#1e1f22;stroke-width:5;fill:#1e1f22" d="M18 18H31L25.5 24L31 30H18Z"/><path style="stroke:#b27ef8;stroke-width:2.2;fill:#2f2a3a" d="M18 18H31L25.5 24L31 30H18Z"/></svg>
    <div class="tt" style="left:316px;top:2115px;color:#9ea1a8">build.gradle.kts</div>
    <svg class="ico" style="left:520px;top:2118px" width="18" height="22" viewBox="0 0 18 22"><path style="stroke:#a8aab0;stroke-width:2.2" d="M5 4l7 7-7 7"/></svg>
    <svg class="ico" style="left:554px;top:2112px" width="32" height="32" viewBox="0 0 32 32"><circle cx="16" cy="16" r="13" style="stroke:#d98b5c;stroke-width:2;fill:#45302a"/><path style="stroke:#d98b5c;stroke-width:1.8" d="M10.5 22l6-10M12.5 9c2 0 3 1 4 4l3.5 9"/></svg>
    <div class="tt" style="left:594px;top:2115px;color:#9ea1a8">android</div>

    <div class="tt" style="left:3056px;top:2115px;color:#9ea1a8">7:9</div>
    <div class="tt" style="left:3126px;top:2115px;color:#9ea1a8">LF</div>
    <div class="tt" style="left:3187px;top:2115px;color:#9ea1a8">UTF-8</div>
    <svg class="ico" style="left:3300px;top:2112px" width="36" height="36" viewBox="0 0 36 36"><path style="fill:#ced0d6;stroke:none" d="M15.7 4C16.8 12.5 20.5 16.5 29.5 17.5C20.5 18.5 16.8 22.5 15.7 31.5C14.6 22.5 10.9 18.5 2 17.5C10.9 16.5 14.6 12.5 15.7 4z"/><circle cx="3" cy="3" r="0" /><circle cx="24.5" cy="9" r="7.2" style="fill:#2b2d30;stroke:none"/><circle cx="24.5" cy="9" r="5.3" style="stroke:#ced0d6;stroke-width:2"/><path style="stroke:#ced0d6;stroke-width:2" d="M21 12.5l7-7"/></svg>
    <svg class="ico" style="left:3368px;top:2112px" width="34" height="36" viewBox="0 0 34 36"><path style="stroke:#a8aab0;stroke-width:2.2" d="M12 31.5H6a2 2 0 0 1-2-2V10l6-6h9a2 2 0 0 1 2 2v9M10 4v6H4"/><path style="stroke:#a8aab0;stroke-width:2.2;fill:#2b2d30" d="M25.10 26.00L25.10 26.22L25.08 26.44L25.07 26.67L25.41 26.95L25.79 27.28L26.18 27.66L26.55 28.07L26.87 28.50L27.10 28.94L26.98 29.25L26.83 29.56L26.67 29.85L26.49 30.14L26.31 30.42L26.10 30.68L25.60 30.70L25.07 30.64L24.53 30.53L24.01 30.37L23.53 30.21L23.11 30.06L22.93 30.18L22.74 30.30L22.55 30.42L22.35 30.52L22.16 30.62L21.96 30.72L21.88 31.16L21.78 31.65L21.66 32.18L21.49 32.71L21.27 33.20L21.00 33.62L20.67 33.67L20.34 33.69L20.00 33.70L19.66 33.69L19.33 33.67L19.00 33.62L18.73 33.20L18.51 32.71L18.34 32.18L18.22 31.65L18.12 31.16L18.04 30.72L17.84 30.62L17.65 30.52L17.45 30.42L17.26 30.30L17.07 30.18L16.89 30.06L16.47 30.21L15.99 30.37L15.47 30.53L14.93 30.64L14.40 30.70L13.90 30.68L13.69 30.42L13.51 30.14L13.33 29.85L13.17 29.56L13.02 29.25L12.90 28.94L13.13 28.50L13.45 28.07L13.82 27.66L14.21 27.28L14.59 26.95L14.93 26.67L14.92 26.44L14.90 26.22L14.90 26.00L14.90 25.78L14.92 25.56L14.93 25.33L14.59 25.05L14.21 24.72L13.82 24.34L13.45 23.93L13.13 23.50L12.90 23.06L13.02 22.75L13.17 22.44L13.33 22.15L13.51 21.86L13.69 21.58L13.90 21.32L14.40 21.30L14.93 21.36L15.47 21.47L15.99 21.63L16.47 21.79L16.89 21.94L17.07 21.82L17.26 21.70L17.45 21.58L17.65 21.48L17.84 21.38L18.04 21.28L18.12 20.84L18.22 20.35L18.34 19.82L18.51 19.29L18.73 18.80L19.00 18.38L19.33 18.33L19.66 18.31L20.00 18.30L20.34 18.31L20.67 18.33L21.00 18.38L21.27 18.80L21.49 19.29L21.66 19.82L21.78 20.35L21.88 20.84L21.96 21.28L22.16 21.38L22.35 21.48L22.55 21.58L22.74 21.70L22.93 21.82L23.11 21.94L23.53 21.79L24.01 21.63L24.53 21.47L25.07 21.36L25.60 21.30L26.10 21.32L26.31 21.58L26.49 21.86L26.67 22.15L26.83 22.44L26.98 22.75L27.10 23.06L26.87 23.50L26.55 23.93L26.18 24.34L25.79 24.72L25.41 25.05L25.07 25.33L25.08 25.56L25.10 25.78L25.10 26.00Z"/><circle cx="20" cy="26" r="1.6" style="fill:#a8aab0;stroke:none"/></svg>
    <div class="tt" style="left:3404px;top:2115px;color:#9ea1a8">2 spaces*</div>
    <svg class="ico" style="left:3563px;top:2113px" width="36" height="34" viewBox="0 0 36 34"><rect x="3" y="16" width="18" height="14" rx="2.5" style="stroke:#ced0d6;stroke-width:2.2"/><path style="stroke:#ced0d6;stroke-width:2.2" d="M12 21v4M17 16v-5a5.5 5.5 0 0 1 11 0v2"/></svg>
    <svg class="ico" style="left:3624px;top:2115px" width="32" height="30" viewBox="0 0 32 30"><defs><linearGradient id="vg" x1="0" y1="0" x2="1" y2="1"><stop offset="0" stop-color="#21d789"/><stop offset="1" stop-color="#087cfa"/></linearGradient></defs><path style="fill:url(#vg);stroke:none" d="M3.4 2H12L11 17.5L19.5 2H28.8L9.5 27.7H3.4Z"/></svg>
    <div class="abs" style="left:3672px;top:2102px;width:148px;height:58px;background:#8ea85b"></div>
    <div class="tt" style="left:3689px;top:2116px;color:#1e1f22;font-size:26px">NORMAL</div>

</div>
</body></html>
